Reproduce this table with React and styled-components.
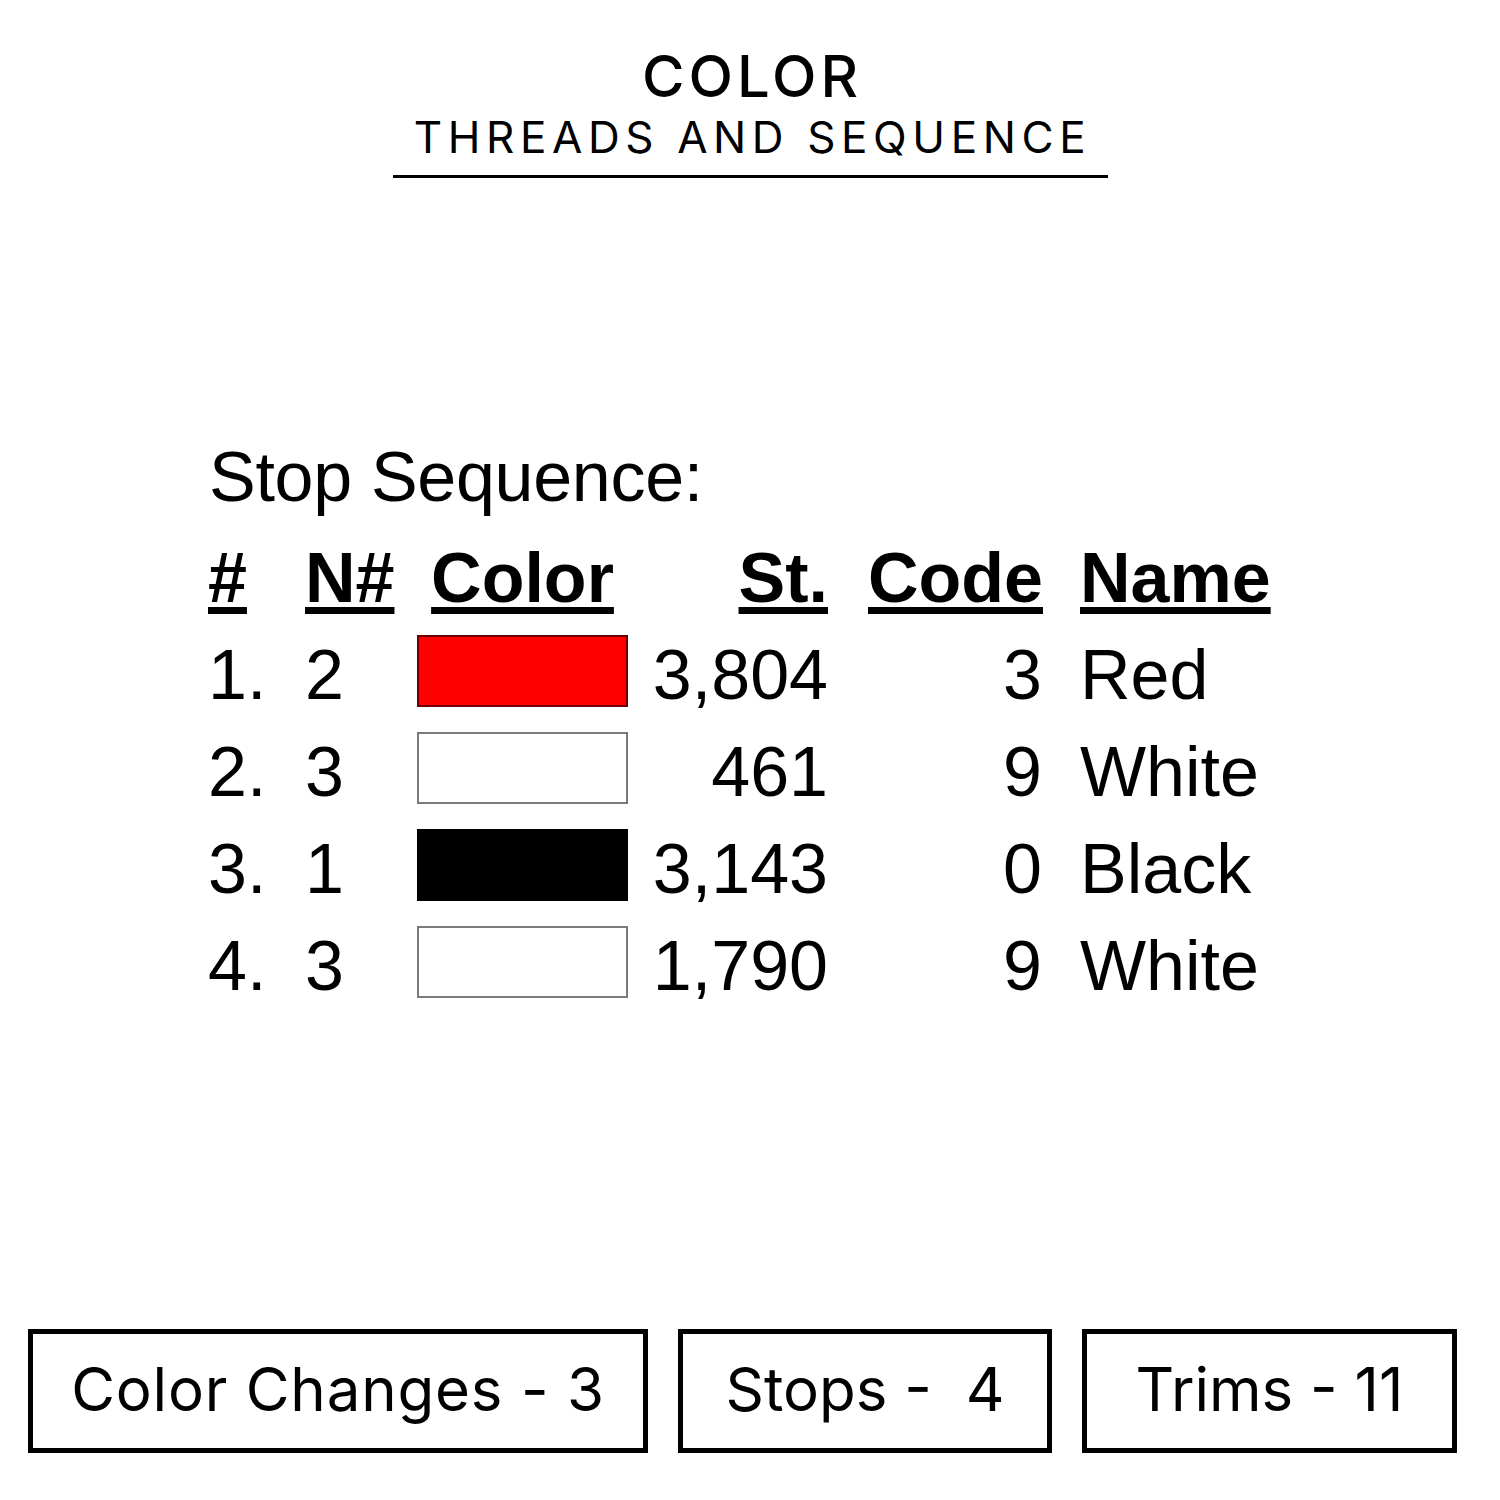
import React from "react";
import styled, { createGlobalStyle } from "styled-components";

const Global = createGlobalStyle`
  html, body { margin: 0; padding: 0; background: #fff; }
  body { font-family: "Liberation Sans", Arial, sans-serif; color: #000; }
`;

const Page = styled.div`
  width: 1500px;
  height: 1500px;
  display: flex;
  flex-direction: column;
  align-items: center;
  box-sizing: border-box;
  background: #fff;
`;

const Header = styled.header`
  margin-top: 43px;
  display: flex;
  flex-direction: column;
  align-items: center;
`;

const Title = styled.h1`
  margin: 0;
  font-family: Inter, "Open Sans", sans-serif;
  font-weight: 500;
  font-size: 58px;
  line-height: 66px;
  letter-spacing: 4px;
  padding-left: 4px;
  padding-right: 0;
`;

const Subtitle = styled.h2`
  margin: 0;
  width: 715px;
  text-align: center;
  font-family: Inter, "Open Sans", sans-serif;
  font-weight: 400;
  font-size: 44px;
  line-height: 56px;
  padding-bottom: 10px;
  border-bottom: 3px solid #000;
  letter-spacing: 5.6px;
  text-indent: 5px;
`;

const Sequence = styled.section`
  align-self: flex-start;
  margin-left: 208px;
  margin-top: 250px;
  font-family: "Liberation Sans", Arial, sans-serif;
  font-size: 70px;
`;

const Caption = styled.div`
  line-height: 98px;
  padding-left: 1px;
  letter-spacing: -0.3px;
`;

const Table = styled.div`
  display: grid;
  grid-template-columns: 97px 112px 211px 200px 215px auto;
  grid-auto-rows: 97px;
  align-items: center;
  margin-top: 4px;
`;

const Head = styled.div`
  font-weight: 700;
  line-height: 97px;
  text-align: ${(p) => p.$align || "left"};
  padding-left: ${(p) => p.$pl || 0}px;
  span {
    text-decoration: underline;
    text-decoration-thickness: 7px;
    text-underline-offset: 5px;
  }
`;

const Cell = styled.div`
  line-height: 97px;
  text-align: ${(p) => p.$align || "left"};
  padding-left: ${(p) => p.$pl || 0}px;
  padding-right: ${(p) => p.$pr || 0}px;
`;

const Swatch = styled.div`
  width: 211px;
  height: 72px;
  box-sizing: border-box;
  margin-top: -9px;
  background: ${(p) => p.$fill};
  border: 2px solid ${(p) => p.$edge};
`;

const Footer = styled.footer`
  margin-top: auto;
  margin-bottom: 47px;
  align-self: flex-start;
  margin-left: 28px;
  display: grid;
  grid-template-columns: 620px 374px 375px;
  column-gap: 30px;
`;

const StatBox = styled.div`
  height: 124px;
  box-sizing: border-box;
  border: 5px solid #000;
  display: flex;
  align-items: center;
  justify-content: center;
  font-family: Inter, "Open Sans", sans-serif;
  font-size: 60px;
  font-weight: 400;
  white-space: pre;
  padding-bottom: 4px;
  letter-spacing: ${(p) => p.$ls || 0}px;
`;

const rows = [
  { n: "1.", needle: "2", fill: "#ff0000", edge: "#6a0000", st: "3,804", code: "3", name: "Red" },
  { n: "2.", needle: "3", fill: "#ffffff", edge: "#7a7a7a", st: "461", code: "9", name: "White" },
  { n: "3.", needle: "1", fill: "#000000", edge: "#000000", st: "3,143", code: "0", name: "Black" },
  { n: "4.", needle: "3", fill: "#ffffff", edge: "#7a7a7a", st: "1,790", code: "9", name: "White" },
];

export default function App() {
  return (
    <>
      <Global />
      <Page>
        <Header>
          <Title>COLOR</Title>
          <Subtitle>THREADS AND SEQUENCE</Subtitle>
        </Header>
        <Sequence>
          <Caption>Stop Sequence:</Caption>
          <Table>
            <Head><span>#</span></Head>
            <Head><span>N#</span></Head>
            <Head $align="center"><span>Color</span></Head>
            <Head $align="right"><span>St.</span></Head>
            <Head $align="right"><span>Code</span></Head>
            <Head $pl={37}><span>Name</span></Head>
            {rows.map((r, i) => (
              <React.Fragment key={i}>
                <Cell>{r.n}</Cell>
                <Cell>{r.needle}</Cell>
                <Swatch $fill={r.fill} $edge={r.edge} />
                <Cell $align="right">{r.st}</Cell>
                <Cell $align="right" $pr={1}>{r.code}</Cell>
                <Cell $pl={37}>{r.name}</Cell>
              </React.Fragment>
            ))}
          </Table>
        </Sequence>
        <Footer>
          <StatBox $ls={0.8}>Color Changes - 3</StatBox>
          <StatBox>{"Stops -  4"}</StatBox>
          <StatBox>Trims - 11</StatBox>
        </Footer>
      </Page>
    </>
  );
}
